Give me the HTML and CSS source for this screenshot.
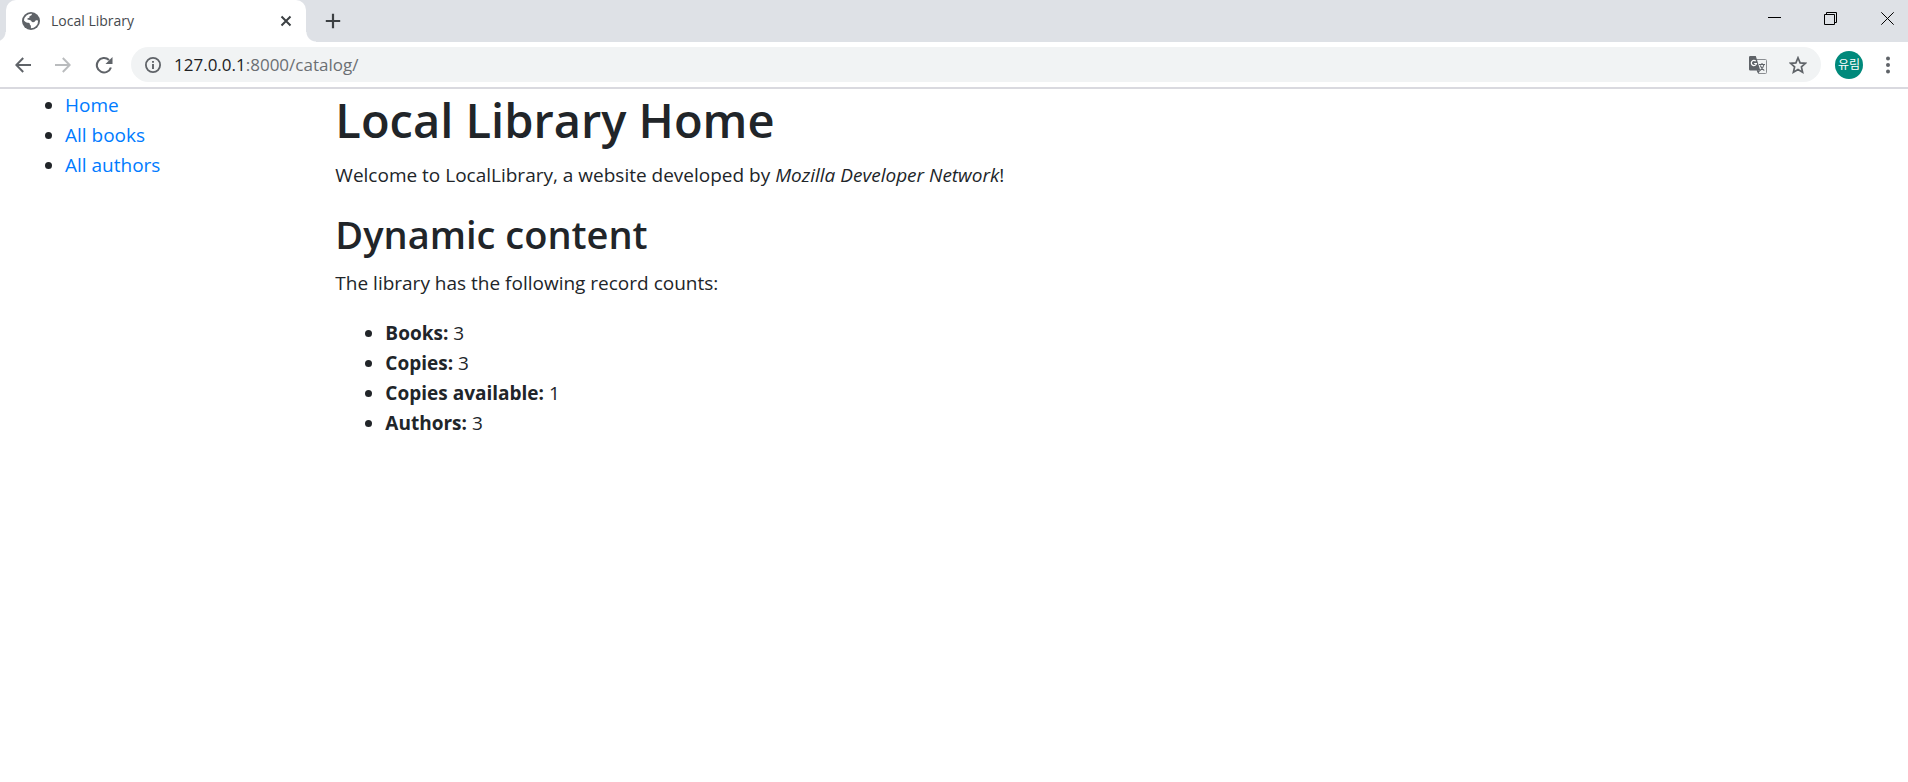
FILE: index.html
```html
<!DOCTYPE html>
<html lang="en">
<head>
<meta charset="utf-8">
<title>Local Library</title>
<link rel="stylesheet" href="styles.css">
</head>
<body>
<header class="browser">
  <div class="tabstrip">
    <div class="tab">
      <svg class="icon-20" viewBox="0 0 24 24"><circle cx="12" cy="12" r="10.8" fill="#5f6368"/><path d="M13.2 3.4c-.2 1.4-.8 2.3-2.3 2.5-.9.1-.9 1-.8 2.1-1.5.1-3 .6-2.4 2 .5 1.1 2.2.5 3.6 1 1.500.6 1.200 2.200 3.100 2.400 1.300.1 2.300-.2 2.600-1.300.3-1.200 1.800-.9 3.500-.5a8.600 8.600 0 0 1-8.600 9v-2.400c0-1.200-1.300-1.300-1.400-2.600 0-1.200-1-1.300-2.500-1.400-2-.1-3.200-1.500-4.500-2.700A8.600 8.600 0 0 1 13.200 3.400z" fill="#fff"/></svg>
      <span class="tab-title">Local Library</span>
      <button class="plain tab-close" aria-label="Close tab"><svg class="icon-12" viewBox="0 0 12 12"><path d="M1.500 1.500l9 9M10.500 1.500l-9 9" stroke="#3c4043" stroke-width="2"/></svg></button>
    </div>
    <button class="plain new-tab" aria-label="New tab"><svg class="icon-16" viewBox="0 0 16 16"><path d="M8 .8v14.400M.8 8h14.400" stroke="#3c4043" stroke-width="2.200"/></svg></button>
    <div class="window-controls">
      <button class="plain" aria-label="Minimize"><svg class="icon-13" viewBox="0 0 13 13"><path d="M0 5.500h13" stroke="#000"/></svg></button>
      <button class="plain" aria-label="Restore"><svg class="icon-13" viewBox="0 0 13 13"><path d="M.5 2.500h10v10H.5zM2.500 2.500v-2h10v10h-2" fill="none" stroke="#000"/></svg></button>
      <button class="plain" aria-label="Close"><svg class="icon-13" viewBox="0 0 13 13"><path d="M.3.3l12.400 12.400M12.700.3L.3 12.700" stroke="#000"/></svg></button>
    </div>
  </div>
  <div class="toolbar">
    <button class="plain" aria-label="Back"><svg class="icon-16" viewBox="0 0 16 16"><path d="M16 8H1.500M8.200 1L1.300 8l6.900 7" fill="none" stroke="#5f6368" stroke-width="2"/></svg></button>
    <button class="plain" aria-label="Forward"><svg class="icon-16" viewBox="0 0 16 16"><path d="M0 8h14.500M7.800 1l6.900 7-6.900 7" fill="none" stroke="#babcbe" stroke-width="2"/></svg></button>
    <button class="plain" aria-label="Reload"><svg class="icon-18" viewBox="0 0 18 18"><path d="M15.900 11.500A7.200 7.200 0 1 1 14 4" fill="none" stroke="#5f6368" stroke-width="2.100"/><path d="M17.500 1v7h-7z" fill="#5f6368"/></svg></button>
    <div class="omnibox">
      <button class="plain" aria-label="Site information"><svg class="icon-16" viewBox="0 0 16 16"><circle cx="8" cy="8" r="7.100" fill="none" stroke="#5f6368" stroke-width="1.800"/><path d="M8 7v5M8 4v1.800" stroke="#5f6368" stroke-width="1.900"/></svg></button>
      <div class="url"><span class="host">127.0.0.1</span>:8000/catalog/</div>
      <button class="plain translate" aria-label="Translate this page"><svg class="icon-18" viewBox="0 0 18 18"><path d="M8 3.500h8.500a1 1 0 0 1 1 1v12a1 1 0 0 1-1 1H9.500L5 4z" fill="#f1f3f4" stroke="#8b8e92"/><path d="M1.200 0h5.600l4.500 14.400H1.200A1.200 1.200 0 0 1 0 13.200v-12A1.200 1.200 0 0 1 1.200 0z" fill="#5f6368"/><path d="M7.600 14.400h3.700l-2 3.200z" fill="#5f6368"/><path d="M6.800 5.200A2.600 2.600 0 1 0 7.500 7.500H5.200" fill="none" stroke="#fff" stroke-width="1.200"/><path d="M10 8.500h6M13 7v1.500M15 8.500c-.5 3-2 4.500-4 6M11.300 9.500c1 2.500 2 4 4 5" fill="none" stroke="#5f6368" stroke-width="1.100"/></svg></button>
      <button class="plain" aria-label="Bookmark this page"><svg class="icon-18" viewBox="0 0 18 18"><path d="M9 1.800l2.100 5.100 5.400.4-4.100 3.600 1.200 5.300L9 13.400l-4.600 2.800 1.200-5.300-4.100-3.600 5.400-.4z" fill="none" stroke="#5f6368" stroke-width="1.700"/></svg></button>
    </div>
    <button class="plain avatar" aria-label="Profile">유림</button>
    <button class="plain" aria-label="Menu"><svg class="icon-18" viewBox="0 0 18 18"><g fill="#5f6368"><circle cx="9" cy="2.600" r="2"/><circle cx="9" cy="9" r="2"/><circle cx="9" cy="15.400" r="2"/></g></svg></button>
  </div>
</header>
<div class="page">
  <nav class="sidebar">
    <ul>
      <li><a href="#home">Home</a></li>
      <li><a href="#books">All books</a></li>
      <li><a href="#authors">All authors</a></li>
    </ul>
  </nav>
  <main class="content">
    <h1>Local Library Home</h1>
    <p>Welcome to LocalLibrary, a website developed by <em>Mozilla Developer Network</em>!</p>
    <h2>Dynamic content</h2>
    <p>The library has the following record counts:</p>
    <ul>
      <li><strong>Books:</strong> 3</li>
      <li><strong>Copies:</strong> 3</li>
      <li><strong>Copies available:</strong> 1</li>
      <li><strong>Authors:</strong> 3</li>
    </ul>
  </main>
</div>
</body>
</html>
```
FILE: styles.css
```css
* { box-sizing: border-box; }
body {
  margin: 0;
  background: #fff;
  color: #212529;
  font: 19px/30px "Open Sans", "Noto Sans", "Noto Sans CJK KR", sans-serif;
}
svg { display: block; }
.icon-12 { width: 12px; height: 12px; }
.icon-13 { width: 13px; height: 13px; }
.icon-16 { width: 16px; height: 16px; }
.icon-18 { width: 18px; height: 18px; }
.icon-20 { width: 20px; height: 20px; }
.plain {
  display: flex;
  align-items: center;
  justify-content: center;
  padding: 0;
  border: 0;
  background: none;
  font: inherit;
}
.browser { border-bottom: 2px solid #d9d9df; }
.tabstrip {
  display: flex;
  height: 42px;
  padding-left: 6px;
  background: #dee1e6;
}
.tab {
  position: relative;
  display: flex;
  align-items: center;
  gap: 10px;
  width: 300px;
  padding: 0 14px 0 15px;
  border-radius: 10px 10px 0 0;
  background: #fff;
}
.tab::before, .tab::after {
  content: "";
  position: absolute;
  bottom: 0;
  width: 10px;
  height: 10px;
}
.tab::before {
  right: 100%;
  background: radial-gradient(circle at 0 0, #dee1e6 9px, #fff 10px);
}
.tab::after {
  left: 100%;
  background: radial-gradient(circle at 100% 0, #dee1e6 9px, #fff 10px);
}
.tab-title {
  flex: 1;
  color: #45494d;
  font-size: 14px;
}
.new-tab { width: 54px; }
.window-controls {
  display: flex;
  margin-left: auto;
  height: 37px;
}
.window-controls button { width: 56px; }
.window-controls button:last-child { width: 50px; padding-left: 8px; }
.toolbar {
  display: flex;
  align-items: center;
  height: 45px;
  padding: 0 11px 0 15px;
  gap: 24px;
}
.omnibox {
  display: flex;
  flex: 1;
  align-items: center;
  height: 35px;
  margin-left: -6px;
  margin-right: -10px;
  padding: 0 14px;
  gap: 13px;
  border-radius: 18px;
  background: #f1f3f4;
}
.url {
  flex: 1;
  color: #6b6f73;
  font-size: 17px;
}
.host { color: #202124; }
.translate { margin-right: 9px; }
.avatar {
  width: 28px;
  height: 28px;
  margin-right: -8px;
  border-radius: 50%;
  background: #00897b;
  color: #fff;
  font-size: 12px;
}
.page { display: flex; }
.sidebar {
  width: 17%;
  padding: 1px 15px 0;
}
.content {
  flex: 1;
  padding: 1px 15px 0 11px;
}
ul {
  margin: 0 0 20px;
  padding-left: 50px;
}
a { color: #007bff; text-decoration: none; }
h1, h2 { margin: 0 0 10px; font-weight: 600; }
h1 { font-size: 47px; line-height: 60px; }
h2 { font-size: 38px; line-height: 48px; }
p { margin: 0 0 20px; }
strong { font-weight: 700; }
```
